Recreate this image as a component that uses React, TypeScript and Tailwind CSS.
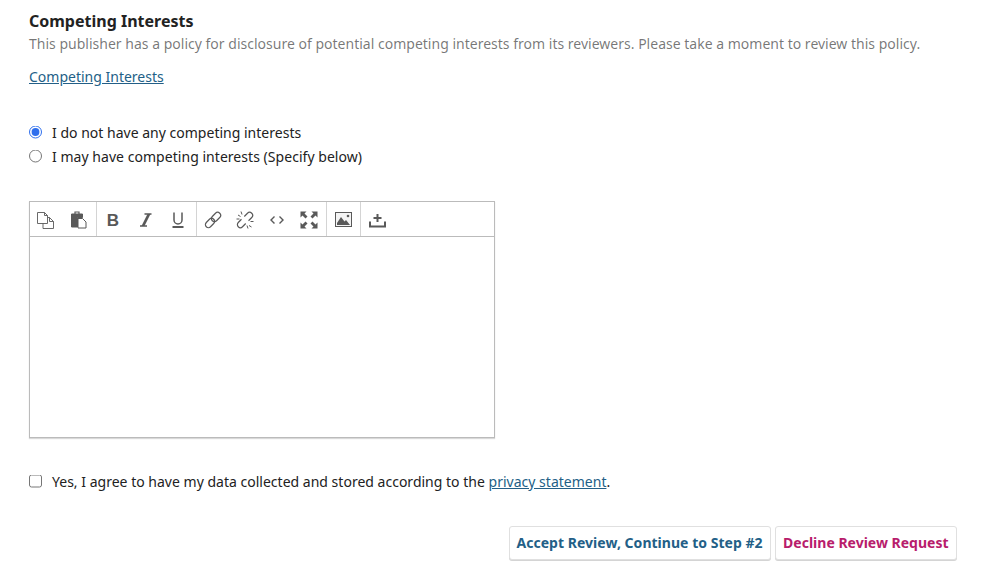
import React from "react";

const Ico = ({ children, narrow }: { children: React.ReactNode; narrow?: boolean }) => (
  <div className={narrow ? "flex h-full w-[32px] shrink-0 items-center justify-center pt-[1px]" : "flex h-full w-[32.5px] shrink-0 items-center justify-center pt-[1px]"}>
    <svg width="18" height="18" viewBox="0 0 18 18" fill="none" stroke="#595959" strokeWidth="1">
      {children}
    </svg>
  </div>
);

const Sep = () => <div className="h-full w-px shrink-0 bg-[#d4d4d4]" />;

export default function App() {
  return (
    <div className="h-[574px] w-[987px] overflow-hidden bg-white pl-[29px] pt-[10px] font-['Noto_Sans',sans-serif] text-[14px] text-[#222222]">
      <div className="text-[16px] font-bold leading-[22px]">Competing Interests</div>
      <div className="mt-[2px] text-[14px] leading-[20px] tracking-[0.008px] text-[rgba(0,0,0,0.54)]">
        This publisher has a policy for disclosure of potential competing interests from its reviewers. Please take a moment to review this policy.
      </div>
      <div className="mt-[13px] leading-[20px]">
        <a className="text-[#235f87] underline" href="#">Competing Interests</a>
      </div>

      <div className="mt-[33px] flex h-[24px] items-center">
        <input type="radio" name="ci" defaultChecked className="m-0 h-[13px] w-[13px] -translate-y-[0.5px] accent-[#2f6fed]" />
        <span className="ml-[10px] tracking-[0.01px]">I do not have any competing interests</span>
      </div>
      <div className="flex h-[24px] items-center">
        <input type="radio" name="ci" className="m-0 h-[13px] w-[13px] -translate-y-[0.5px]" />
        <span className="ml-[10px] tracking-[0.04px]">I may have competing interests (Specify below)</span>
      </div>

      <div className="mt-[33px] h-[237px] w-[466px] border border-[#bbbbbb] shadow-[0_1px_1px_rgba(0,0,0,0.15)]">
        <div className="flex h-[35px] items-stretch border-b border-[#bbbbbb]">
          <div className="flex w-[66px] shrink-0 items-center">
            <Ico>
              <path d="M0.500 1.500h7l3 3v8h-10z" strokeWidth="0.900" />
              <path d="M7.500 1.500v3h3" strokeWidth="0.900" />
              <path d="M10.500 6.500h2l4 4v7h-10.500v-5" strokeWidth="0.900" />
              <path d="M12.500 6.500v4h4" strokeWidth="0.900" />
            </Ico>
            <Ico>
              <path d="M1.500 3h11v3.500H7.500V16h-6z" fill="#595959" />
              <path d="M5 3V1h4v2" strokeWidth="1.200" />
              <path d="M8 7.500h4.500l3.500 3.500v6H8z" fill="#fff" />
            </Ico>
          </div>
          <Sep />
          <div className="flex w-[99px] shrink-0 items-center">
            <Ico>
              <text x="9" y="15" textAnchor="middle" fontFamily="Liberation Sans" fontWeight="700" fontSize="17" fill="#595959" stroke="none">B</text>
            </Ico>
            <Ico>
              <path d="M7 15H4.500L10.500 3h3L7.500 15" fill="#595959" stroke="none" />
              <path d="M7.500 3h7M3 15h7" strokeWidth="1.500" />
            </Ico>
            <Ico>
              <path d="M5 1.500v7.500a4 4 0 0 0 8 0V1.500" strokeWidth="1.500" />
              <path d="M3.500 16h11" strokeWidth="2" />
            </Ico>
          </div>
          <Sep />
          <div className="flex w-[129px] shrink-0 items-center pl-[-1px]">
            <Ico narrow>
              <g transform="rotate(-45 9 9)" strokeWidth="1.200">
                <rect x="-0.500" y="6" width="10.500" height="6" rx="3" />
                <rect x="8" y="6" width="10.500" height="6" rx="3" />
              </g>
            </Ico>
            <Ico narrow>
              <g transform="rotate(-45 9 9)" strokeWidth="1.200">
                <path d="M7 6H2.500a3 3 0 0 0 0 6H7" />
                <path d="M11 6h4.500a3 3 0 0 1 0 6H11" />
              </g>
              <path d="M2 4l2.500 1.500M5 0.500l1 3M13 14.500l2.500 1.500M12 17.500l-1-3M0.500 8h3M14.500 10.500h3" strokeWidth="1" />
            </Ico>
            <Ico narrow>
              <path d="M6.500 5.500L3 9l3.500 3.500M11.500 5.500L15 9l-3.500 3.500" strokeWidth="1.400" />
            </Ico>
            <Ico narrow>
              <path d="M0.500 0.500h6L4.500 2.500 7.500 5.500 5.500 7.500 2.500 4.500 0.500 6.500zM17.500 0.500v6l-2-2-3 3-2-2 3-3-2-2zM0.500 17.500v-6l2 2 3-3 2 2-3 3 2 2zM17.500 17.500h-6l2-2-3-3 2-2 3 3 2-2z" fill="#595959" stroke="none" />
            </Ico>
          </div>
          <Sep />
          <div className="flex w-[33px] shrink-0 items-center justify-center pt-[1px]">
            <svg width="17" height="15" viewBox="0 0 17 15" fill="none">
              <rect x="0.500" y="0.500" width="16" height="14" stroke="#595959" fill="#f4f4f4" />
              <path d="M2 13V11L6 5l3.500 4.500L11 8l4 5z" fill="#595959" />
              <circle cx="13" cy="4" r="1.300" fill="#595959" />
            </svg>
          </div>
          <Sep />
          <div className="flex w-[33px] shrink-0 items-center justify-center">
            <svg width="17" height="14" viewBox="0 0 17 14" fill="none" stroke="#595959" strokeWidth="2" className="mt-[3px]">
              <path d="M8.500 0v8M4.500 4h8" />
              <path d="M1 7.500v5h15v-5" />
            </svg>
          </div>
        </div>
      </div>

      <div className="mt-[32px] flex h-[22px] items-center">
        <input type="checkbox" className="m-0 h-[13px] w-[13px] -translate-y-[0.5px]" />
        <span className="ml-[10px] tracking-[0.01px]">
          Yes, I agree to have my data collected and stored according to the{" "}
          <a className="text-[#235f87] underline" href="#">privacy statement</a>.
        </span>
      </div>

      <div className="mt-[34px] flex w-[928px] justify-end gap-[4px]">
        <button className="h-[34px] rounded-[3px] border border-[#e0e0e0] bg-white px-[7px] pb-[2px] text-[14px] font-bold tracking-[0.03px] text-[#235f87] shadow-[0_1px_0_#d4d4d4]">
          Accept Review, Continue to Step #2
        </button>
        <button className="h-[34px] rounded-[3px] border border-[#e0e0e0] bg-white px-[7.5px] pb-[2px] text-[14px] font-bold text-[#b81c6c] shadow-[0_1px_0_#d4d4d4]">
          Decline Review Request
        </button>
      </div>
    </div>
  );
}
